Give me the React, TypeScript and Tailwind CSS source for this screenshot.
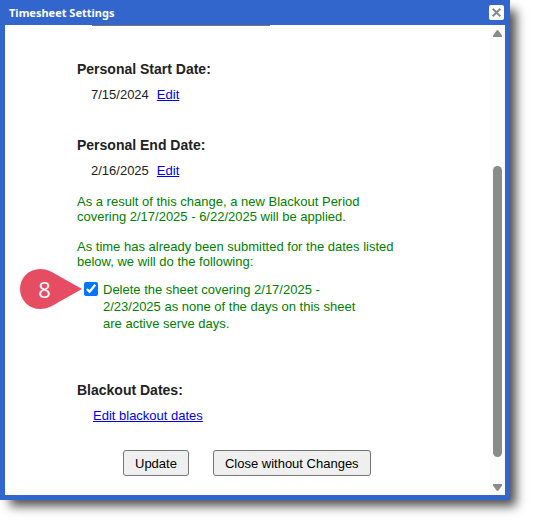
import * as React from "react"

interface DateRow {
  label: string
  value: string
}

const dates: DateRow[] = [
  { label: "Personal Start Date:", value: "7/15/2024" },
  { label: "Personal End Date:", value: "2/16/2025" },
]

const linkStyle = "text-[#0000ee] underline"
const btnStyle =
  "h-[26px] rounded-[3px] border border-[#767676] bg-[#efefef] px-[11px] pt-px text-[13px] text-black"

function StepMarker() {
  return (
    <div className="pointer-events-none absolute -left-[64px] -top-3 h-10 w-[62px]">
      <svg viewBox="0 0 62 40" className="h-full w-full" aria-hidden="true">
        <path
          d="M62 20 L38 6.5 C32 3 28 0 20 0 A20 20 0 0 0 20 40 C28 40 32 37 38 33.5 Z"
          fill="#e64d62"
        />
      </svg>
      <span className="absolute inset-y-0 left-0 flex w-[49px] items-center justify-center font-['Open_Sans',sans-serif] text-[22px] text-white">
        8
      </span>
    </div>
  )
}

function ScrollRail() {
  return (
    <div className="flex w-[15px] shrink-0 flex-col items-center bg-[#fcfcfc] pb-1 pt-[5px]">
      <svg width="9" height="7" viewBox="0 0 9 7" aria-hidden="true">
        <path d="M3.6 .5 Q4.5 -.4 5.4 .5 L9 5.5 V7 H0 V5.5 Z" fill="#8b8b8b" />
      </svg>
      <div className="grow-[129]" />
      <div className="w-[9px] grow-[291] rounded-full bg-[#8b8b8b]" />
      <div className="grow-[27]" />
      <svg width="9" height="7" viewBox="0 0 9 7" aria-hidden="true">
        <path d="M3.6 6.5 Q4.5 7.4 5.4 6.5 L9 1.5 V0 H0 V1.5 Z" fill="#8b8b8b" />
      </svg>
    </div>
  )
}

export default function TimesheetSettings() {
  const [deleteSheet, setDeleteSheet] = React.useState(true)

  return (
    <div className="min-h-screen bg-white pr-[23px] font-['Liberation_Sans',Arial,sans-serif] text-[13px] text-[#222]">
      <div
        role="dialog"
        aria-labelledby="dialog-title"
        className="bg-[#3366cc] px-[5px] pb-[5px] shadow-[8px_8px_10px_-2px_rgba(0,0,0,0.7)]"
      >
        <header className="flex h-[25px] items-center justify-between pl-1 pr-px">
          <h1
            id="dialog-title"
            className="pt-px font-['Noto_Sans',sans-serif] text-[11px] font-bold text-white"
          >
            Timesheet Settings
          </h1>
          <button
            type="button"
            aria-label="Close"
            className="flex size-[15px] items-center justify-center rounded-[2px] bg-white"
          >
            <svg width="9" height="9" viewBox="0 0 9 9" aria-hidden="true">
              <path d="M.7 .7 L8.3 8.3 M8.3 .7 L.7 8.3" stroke="#848b8b" strokeWidth="2" />
            </svg>
          </button>
        </header>

        <div className="flex bg-white">
          <main className="min-w-0 grow pb-[19px] pl-[72px] pr-4">
            {/* bottom edge of the field that is scrolled out above */}
            <div className="ml-[15px] h-px w-[178px] bg-[#767676]" />

            <div className="mt-[33px] flex flex-col gap-[30px]">
              {dates.map((date) => (
                <section key={date.label}>
                  <h2 className="text-[14px] font-bold leading-5">{date.label}</h2>
                  <p className="mt-[6px] flex gap-2 pl-[14px] leading-5">
                    <span>{date.value}</span>
                    <a href="#edit" className={linkStyle}>
                      Edit
                    </a>
                  </p>
                </section>
              ))}
            </div>

            <div className="mt-[13px] max-w-[325px] text-[#008000]">
              <p className="leading-[15px]">
                As a result of this change, a new Blackout Period
                <br />
                covering 2/17/2025 - 6/22/2025 will be applied.
              </p>
              <p className="mt-[15px] leading-[15px]">
                As time has already been submitted for the dates listed below, we will do the
                following:
              </p>
              <div className="relative ml-[7px] mt-3 flex items-start gap-[5px]">
                <StepMarker />
                <input
                  id="delete-sheet"
                  type="checkbox"
                  checked={deleteSheet}
                  onChange={(e) => setDeleteSheet(e.target.checked)}
                  className="mt-px size-[14px] shrink-0 accent-[#0075ff]"
                />
                <label htmlFor="delete-sheet" className="max-w-[262px] leading-[17px]">
                  Delete the sheet covering 2/17/2025 -<br />
                  2/23/2025 as none of the days on this sheet
                  <br />
                  are active serve days.
                </label>
              </div>
            </div>

            <section className="mt-12">
              <h2 className="text-[14px] font-bold leading-5">Blackout Dates:</h2>
              <p className="mt-[6px] pl-4 leading-5">
                <a href="#blackout" className={linkStyle}>
                  Edit blackout dates
                </a>
              </p>
            </section>

            <div className="mt-6 flex gap-6 pl-[46px]">
              <button type="button" className={btnStyle}>
                Update
              </button>
              <button type="button" className={btnStyle}>
                Close without Changes
              </button>
            </div>
          </main>
          <ScrollRail />
        </div>
      </div>
    </div>
  )
}
